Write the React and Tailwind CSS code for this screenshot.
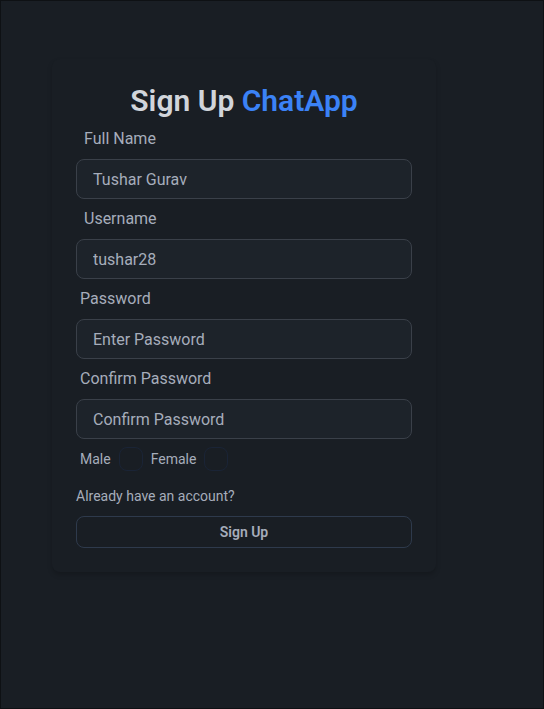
import React from 'react';

const fields = [
  { label: 'Full Name', value: 'Tushar Gurav', pad: 'px-2' },
  { label: 'Username', value: 'tushar28', pad: 'px-2' },
  { label: 'Password', placeholder: 'Enter Password', pad: 'px-1', type: 'password' },
  { label: 'Confirm Password', placeholder: 'Confirm Password', pad: 'px-1', type: 'password' },
];

const App = () => {
  return (
    <div
      className="h-[709px] w-full overflow-hidden border border-[#0e1114] bg-[#191e24] text-[#a6adbb]"
      style={{ fontFamily: 'Roboto, "Open Sans", sans-serif' }}
    >
      <div className="ml-[51px] mt-[58px] w-[384px] rounded-lg bg-[#191e24] p-6 shadow-[0_3px_5px_rgba(0,0,0,0.18)]">
        <h1 className="text-center text-3xl font-semibold leading-9 text-[#d1d5db]">
          Sign Up <span className="text-[#3b82f6]">ChatApp</span>
        </h1>

        <form onSubmit={(e) => e.preventDefault()}>
          {fields.map((f) => (
            <div key={f.label}>
              <label className={`flex h-10 items-center ${f.pad}`}>
                <span className="text-base text-[#a6adbb]">{f.label}</span>
              </label>
              <input
                type={f.type || 'text'}
                defaultValue={f.value}
                placeholder={f.placeholder}
                className="h-10 w-full rounded-lg border border-[#3a4049] bg-[#1d232a] px-4 text-base text-[#a6adbb] outline-none placeholder:text-[#a6adbb]"
              />
            </div>
          ))}

          {/* Gender checkboxes */}
          <div className="flex h-10 items-center">
            <label className="flex items-center gap-2 px-1">
              <span className="text-sm">Male</span>
              <span className="h-6 w-6 rounded-lg border border-[#1a2436]" />
            </label>
            <label className="flex items-center gap-2 px-1">
              <span className="text-sm">Female</span>
              <span className="h-6 w-6 rounded-lg border border-[#1a2436]" />
            </label>
          </div>

          <a href="#" className="mt-[7px] inline-block text-sm leading-5 text-[#a6adbb]">
            Already have an account?
          </a>

          <button
            type="submit"
            className="mt-2 flex h-8 w-full items-center justify-center rounded-lg border border-[#2e3a4c] text-sm font-semibold text-[#a6adbb]"
          >
            Sign Up
          </button>
        </form>
      </div>
    </div>
  );
};

export default App;
